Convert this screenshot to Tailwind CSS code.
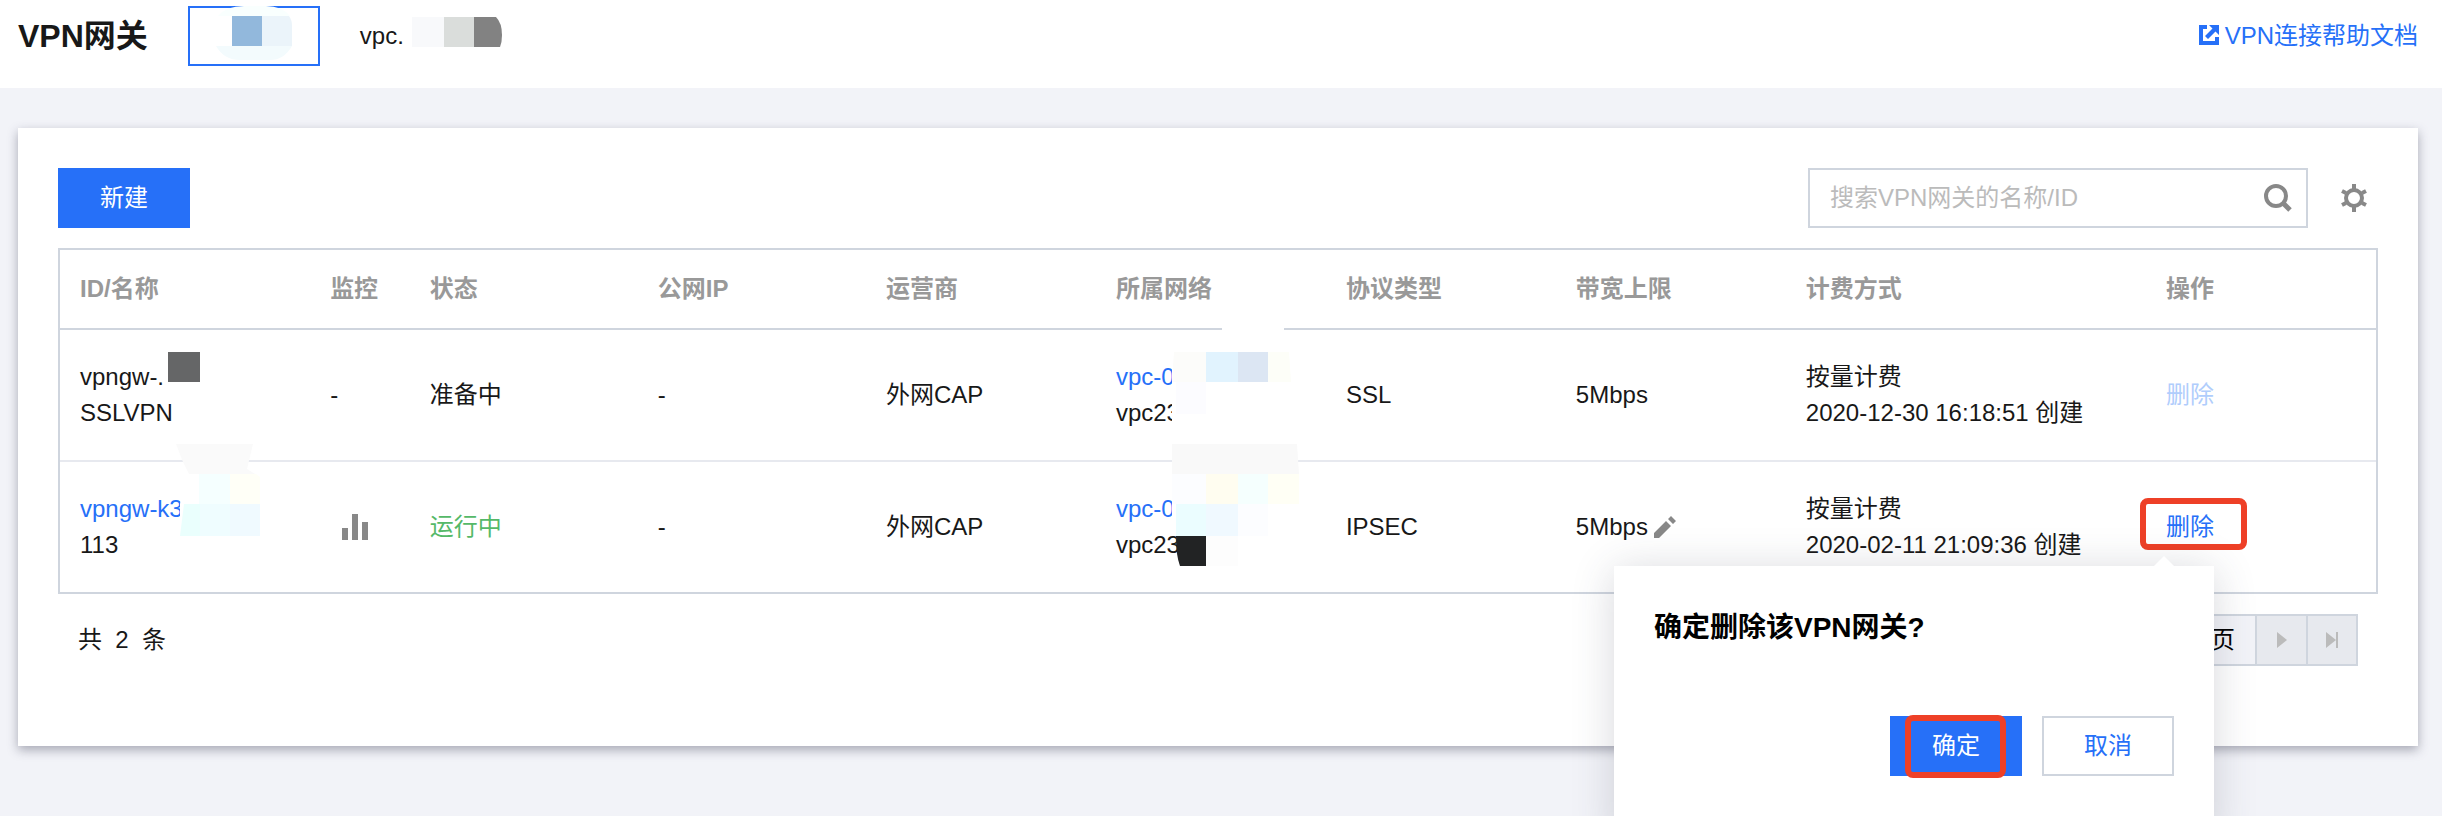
<!DOCTYPE html>
<html lang="zh-CN">
<head>
<meta charset="utf-8">
<title>VPN网关</title>
<script src="https://cdn.jsdelivr.net/npm/@tailwindcss/browser@4"></script>
</head>
<body class="min-h-screen overflow-hidden bg-[#f2f3f8] font-['Liberation_Sans','Noto_Sans_CJK_SC',sans-serif] text-2xl/9 text-[#181818]">
<header class="flex h-22 items-start bg-white px-[18px]">
  <h1 class="mt-[18px] mr-10 text-[32px]/9 font-bold">VPN网关</h1>
  <button type="button" aria-label="地域" class="mt-1.5 flex h-15 w-[132px] justify-center border-2 border-[#2670f8] bg-white">
    <svg class="-mt-0.5 h-14 w-20" viewBox="0 0 80 56" aria-hidden="true">
      <path d="M4 10Q12 0 30 0H52Q68 0 76 10Z" fill="#f9fffe"/>
      <path d="M2 40H78Q70 54 56 54H26Q10 54 2 40Z" fill="#f3fbfd"/>
      <path d="M18 10H48V40H18Z" fill="#92b8dc"/><path d="M48 10H75Q78 14 78 20V40H48Z" fill="#ebf4fa"/>
    </svg>
  </button>
  <button type="button" class="mt-[18px] ml-10 flex items-center gap-2">vpc.
    <svg class="-mt-2 h-[30px] w-[92px]" viewBox="0 0 92 30" aria-hidden="true">
      <path d="M0 0H32V30H0Z" fill="#f8f9fb"/><path d="M32 0H62V30H32Z" fill="#dadddb"/><path d="M62 0H84Q90 6 90 18Q90 25 88 30H62Z" fill="#828282"/>
    </svg>
  </button>
  <a href="#" class="mt-[18px] mr-1.5 ml-auto flex items-center gap-1.5 text-[#2670f8]">
    <svg class="-mt-0.5 h-5 w-5" viewBox="0 0 20 20" fill="currentColor" aria-hidden="true"><path d="M0 0H8V4H4V16H16V12H20V20H0Z"/><path d="M10 0H20V10L16.500 6.500L9 14L6 11L13.500 3.500Z"/></svg>VPN连接帮助文档</a>
</header>
<main class="mx-[18px] mt-10 mr-6 bg-white px-10 pt-10 pb-20 shadow-[0_4px_10px_rgba(54,58,80,0.4)]">
  <div class="flex items-center">
    <button type="button" class="h-15 w-[132px] bg-[#2670f8] text-white">新建</button>
    <label class="ml-auto flex h-15 w-[500px] items-center border-2 border-[#cfd5de] pr-3.5 pl-5">
      <input type="search" aria-label="搜索VPN网关" placeholder="搜索VPN网关的名称/ID" class="min-w-0 flex-1 outline-none placeholder:text-[#bbb]">
      <svg class="h-7 w-7" viewBox="0 0 28 28" fill="none" stroke="#888" aria-hidden="true"><circle cx="12" cy="12" r="10" stroke-width="4"/><path d="M19 19L26 26" stroke-width="5"/></svg>
    </label>
    <button type="button" aria-label="设置" class="mr-2.5 ml-8 grid h-7 w-7 place-items-center">
      <svg class="h-7 w-7" viewBox="0 0 28 28" fill="none" stroke="#888" aria-hidden="true"><circle cx="14" cy="14" r="8" stroke-width="4"/><path d="M14 0V5M14 23V28M2 7L6 9M26 7L22 9M2 21L6 19M26 21L22 19" stroke-width="4"/></svg>
    </button>
  </div>
  <table class="mt-5 w-full table-fixed border-separate border-spacing-0 border-2 border-[#cfd5de] text-left">
    <colgroup><col class="w-[10.8%]"><col class="w-[4.3%]"><col class="w-[9.85%]"><col class="w-[9.85%]"><col class="w-[9.93%]"><col class="w-[9.93%]"><col class="w-[9.93%]"><col class="w-[9.93%]"><col class="w-[15.55%]"><col></colgroup>
    <thead><tr class="h-20 text-[#999] *:border-b-2 *:border-[#cfd5de] *:px-5 *:font-bold">
      <th scope="col">ID/名称</th><th scope="col">监控</th><th scope="col">状态</th><th scope="col">公网IP</th><th scope="col">运营商</th><th scope="col">所属网络</th><th scope="col">协议类型</th><th scope="col">带宽上限</th><th scope="col">计费方式</th><th scope="col">操作</th>
    </tr></thead>
    <tbody>
      <tr class="h-33 *:border-b-2 *:border-[#e7e9ef] *:px-5">
        <td class="relative">vpngw-.<br>SSLVPN
          <svg class="absolute top-[22px] left-[108px] h-[30px] w-8" viewBox="0 0 32 30" aria-hidden="true"><path d="M0 0H32V30H0Z" fill="#656667"/></svg></td>
        <td>-</td><td>准备中</td><td>-</td><td>外网CAP</td>
        <td class="relative"><a href="#" class="text-[#2670f8]">vpc-0</a><br>vpc23
          <svg class="absolute -top-0.5 left-[76px] h-[100px] w-[122px]" viewBox="0 0 122 100" aria-hidden="true"><path d="M50 0H112V24H122V100H0V24H50Z" fill="#fff"/><path d="M2 24H34V54H0Z" fill="#fcfcfa"/><path d="M34 24H66V54H34Z" fill="#e1f3fe"/><path d="M66 24H96V54H66Z" fill="#dce6f3"/><path d="M96 24H117L119 54H96Z" fill="#fdfef8"/><path d="M4 54H34V86H4Z" fill="#fcfcff"/></svg></td>
        <td>SSL</td><td>5Mbps</td><td>按量计费<br>2020-12-30 16:18:51 创建</td>
        <td><button type="button" disabled class="text-[#b0cdfc]">删除</button></td>
      </tr>
      <tr class="h-[130px] *:px-5">
        <td class="relative"><a href="#" class="text-[#2670f8]">vpngw-k3</a><br>113
          <svg class="absolute -top-[18px] left-[116px] h-[94px] w-[86px]" viewBox="0 0 86 94" aria-hidden="true"><path d="M8 30H84V94H4V60Z" fill="#fff"/><path d="M0 0H77L71 25L79 30H13L7 18Z" fill="#fafafa"/><path d="M23 30H54V60H23Z" fill="#f5ffff"/><path d="M54 30H80L84 33V60H54Z" fill="#fffff7"/><path d="M8 60H24V92H4Z" fill="#eafffd"/><path d="M24 60H54V92H24Z" fill="#effdff"/><path d="M54 60H84V92H54Z" fill="#f0faff"/></svg></td>
        <td><button type="button" aria-label="监控" class="ml-3 block"><svg class="h-[26px] w-[26px]" viewBox="0 0 26 26" fill="#888" aria-hidden="true"><path d="M0 14H6V26H0ZM10 0H16V26H10ZM20 8H26V26H20Z"/></svg></button></td>
        <td class="text-[#55b968]">运行中</td><td>-</td><td>外网CAP</td>
        <td class="relative"><a href="#" class="text-[#2670f8]">vpc-0</a><br>vpc23
          <svg class="absolute -top-[18px] left-[76px] h-[124px] w-32" viewBox="0 0 128 124" aria-hidden="true"><path d="M0 30H127V124H8L4 92H0Z" fill="#fff"/><path d="M0 0H125L127 30H0Z" fill="#f9f9f9"/><path d="M0 30H34V60H0Z" fill="#fcfdff"/><path d="M34 30H66V60H34Z" fill="#fffdf0"/><path d="M66 30H96V60H66Z" fill="#f5fffe"/><path d="M96 30H127V60H96Z" fill="#fffff5"/><path d="M4 60H34V92H4Z" fill="#ebfdff"/><path d="M34 60H66V92H34Z" fill="#f0f9ff"/><path d="M66 60H96V92H66Z" fill="#fcfdff"/><path d="M4 92H34V122H8Q4 112 4 92Z" fill="#222324"/><path d="M34 92H66V122H34Z" fill="#fdfdfd"/></svg></td>
        <td>IPSEC</td>
        <td><span class="flex items-center gap-1.5">5Mbps<button type="button" aria-label="编辑带宽"><svg class="block h-[22px] w-[22px]" viewBox="0 0 22 22" fill="#888" aria-hidden="true"><path d="M0 17L12 5L17 10L5 22H0ZM14 3L17 0L22 5L19 8Z"/></svg></button></span></td>
        <td>按量计费<br>2020-02-11 21:09:36 创建</td>
        <td class="relative"><button type="button" class="text-[#2670f8]">删除</button>
          <span class="pointer-events-none absolute top-9 -left-1.5 h-[52px] w-[107px] rounded-lg border-6 border-[#ee4027]"></span>
          <div role="dialog" aria-labelledby="confirm-title" class="absolute top-[104px] right-[162px] w-[600px] bg-white px-10 pt-11 pb-16 shadow-[0_4px_40px_rgba(54,58,80,0.2)]">
            <svg class="absolute -top-2.5 right-10 h-2.5 w-5" viewBox="0 0 20 10" fill="#fff" aria-hidden="true"><path d="M0 10L10 0L20 10Z"/></svg>
            <h2 id="confirm-title" class="text-[28px]/9 font-bold text-black">确定删除该VPN网关?</h2>
            <div class="mt-[70px] flex justify-end gap-5">
              <button type="button" class="relative h-15 w-[132px] bg-[#2670f8] text-white">确定<span class="pointer-events-none absolute -top-px left-[15px] h-[63px] w-[101px] rounded-lg border-6 border-[#ee4027]"></span></button>
              <button type="button" class="h-15 w-[132px] border-2 border-[#cfd5de] bg-white text-[#2670f8]">取消</button>
            </div>
          </div></td>
      </tr>
    </tbody>
  </table>
  <div class="mt-5 flex h-13 items-center justify-between px-5">
    <p class="whitespace-pre">共  2  条</p>
    <nav aria-label="分页" class="flex h-13 border-2 border-[#cfd5de] bg-[#f2f3f8]">
      <span class="flex items-center px-5 text-black">/ 1 页</span>
      <button type="button" disabled aria-label="下一页" class="grid w-[51px] place-items-center border-l-2 border-[#cfd5de] bg-[#e7e9ee]"><svg class="h-4 w-2.5" viewBox="0 0 10 16" fill="#bbb"><path d="M0 0L10 8L0 16Z"/></svg></button>
      <button type="button" disabled aria-label="末页" class="grid w-[50px] place-items-center border-l-2 border-[#cfd5de] bg-[#e7e9ee]"><svg class="h-4 w-3" viewBox="0 0 12 16" fill="#bbb"><path d="M0 0L10 8L0 16ZM10 0H12V16H10Z"/></svg></button>
    </nav>
  </div>
</main>
</body>
</html>
